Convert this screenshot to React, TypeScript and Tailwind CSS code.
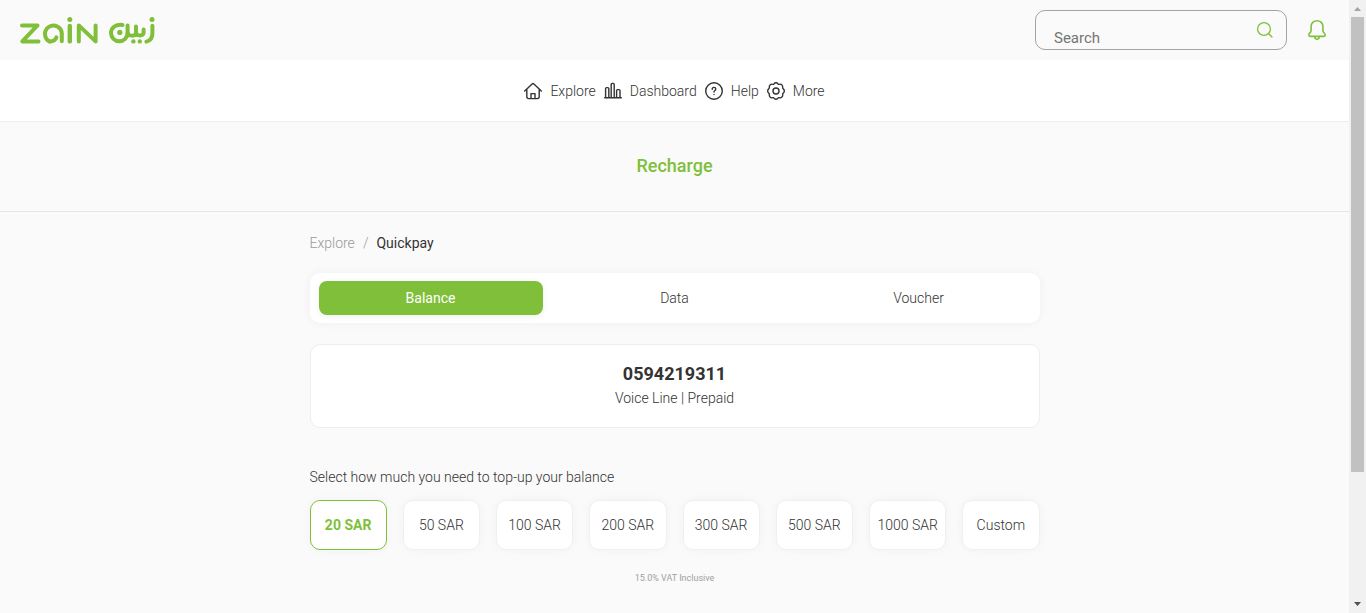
import { useState } from "react";
import type { ReactNode } from "react";

function ZainLogo() {
  return (
    <svg width="140" height="32" viewBox="18 14 140 32" fill="none" stroke="#80bf3a" strokeWidth="4" strokeLinecap="round" strokeLinejoin="round" aria-hidden="true">
      <path d="M22 25.4H37.5L22.3 41.4H38.5" />
      <path d="M49.5 41.4A8.4 8.4 0 1 1 61.8 33.6V41.2" />
      <path d="M49.5 41.4Q55 41.6 56.4 37.4" />
      <path d="M69.8 26V41.4" strokeWidth="4.4" />
      <circle cx="69.8" cy="19.4" r="2.5" fill="#80bf3a" stroke="none" />
      <path d="M78.8 41.4V25.4L95.6 41.4V25.4" />
      <path d="M122.5 25C114.5 23.8 111 28.6 111 33A8.3 8.3 0 0 0 127.6 33V25.4" />
      <path d="M127.6 33C128.2 36.2 135.5 36.8 136 33V26.5M136 33C137 36.2 143 36.4 143.6 33V29.5" />
      <circle cx="119.8" cy="32.4" r="2.6" fill="#80bf3a" stroke="none" />
      <circle cx="133.4" cy="41.4" r="2.2" fill="#80bf3a" stroke="none" />
      <circle cx="139.8" cy="41.4" r="2.2" fill="#80bf3a" stroke="none" />
      <circle cx="152" cy="19.4" r="2.5" fill="#80bf3a" stroke="none" />
      <path d="M152.4 25.8V33.5C152.4 38 150 40.8 146.4 41.6" />
    </svg>
  );
}

function Icon({ children }: { children: ReactNode }) {
  return (
    <svg className="h-[18px] w-[18px] shrink-0" viewBox="1 1 18 18" fill="none" stroke="#333" strokeWidth="1.4" strokeLinecap="round" strokeLinejoin="round" aria-hidden="true">
      {children}
    </svg>
  );
}

const gear =
  "M8 2.8Q8.6 1.7 10 1.7T12 2.8Q12.5 3.6 13.5 3.3Q15 2.8 15.9 3.9T16.7 6.3Q16.4 7.3 17.3 7.9Q18.3 8.6 18.3 10T17.3 12.1Q16.4 12.7 16.7 13.7Q17 15 15.9 16.1T13.5 16.7Q12.5 16.4 12 17.2Q11.4 18.3 10 18.3T8 17.2Q7.5 16.4 6.5 16.7Q5 17.2 4.1 16.1T3.3 13.7Q3.6 12.7 2.7 12.1Q1.7 11.4 1.7 10T2.7 7.9Q3.6 7.3 3.3 6.3Q3 5 4.1 3.9T6.5 3.3Q7.5 3.6 8 2.8Z";

const nav: { label: string; icon: ReactNode }[] = [
  {
    label: "Explore",
    icon: (
      <Icon>
        <path d="M1.7 10L9.1 3Q10 2.2 10.9 3L18.3 10M3.8 8.6V15.6Q3.8 17.6 5.8 17.6H14.2Q16.2 17.6 16.2 15.6V8.6M8 17.4V12.6H12V17.4" />
      </Icon>
    ),
  },
  {
    label: "Dashboard",
    icon: (
      <Icon>
        <path d="M1.7 16.8H18.3M2.6 16.4V7.6Q2.6 6.6 3.6 6.6H4.8Q5.8 6.6 5.8 7.6V16.4M8.2 16.4V3.4Q8.2 2.4 9.2 2.4H10.2Q11.2 2.4 11.2 3.4V16.4M13.6 16.4V9.6Q13.6 8.6 14.6 8.6H16Q17 8.6 17 9.6V16.4" />
      </Icon>
    ),
  },
  {
    label: "Help",
    icon: (
      <Icon>
        <circle cx="10" cy="10" r="8.3" />
        <path d="M8.2 8.2Q8.2 6.4 10 6.4T11.8 8Q11.8 9 10.8 9.6Q10 10 10 11.1M10 13.4V13.6" />
      </Icon>
    ),
  },
  {
    label: "More",
    icon: (
      <Icon>
        <path d={gear} />
        <circle cx="10" cy="10" r="3" />
      </Icon>
    ),
  },
];

const tabs = ["Balance", "Data", "Voucher"];
const amounts = ["20 SAR", "50 SAR", "100 SAR", "200 SAR", "300 SAR", "500 SAR", "1000 SAR", "Custom"];

function ScrollRail() {
  return (
    <div className="sticky top-0 flex h-screen w-[17px] shrink-0 flex-col items-center bg-[#f1f1f1]" aria-hidden="true">
      <svg className="h-[17px] w-[17px] shrink-0" viewBox="0 0 17 17"><path d="M5 11L8.5 7L12 11Z" fill="#a3a3a3" /></svg>
      <div className="flex w-full grow flex-col px-0.5">
        <div className="h-[78.5%] bg-[#c1c1c1]" />
      </div>
      <svg className="h-[17px] w-[17px] shrink-0" viewBox="0 0 17 17"><path d="M5 6L8.5 10L12 6Z" fill="#505050" /></svg>
    </div>
  );
}

export default function App() {
  const [tab, setTab] = useState("Balance");
  const [amount, setAmount] = useState("20 SAR");
  return (
    <div className="flex min-h-screen bg-[#fafafa] font-['Roboto',sans-serif] text-sm font-light text-[#333]">
      <div className="min-w-0 grow">
        <header className="flex h-15 items-center justify-between pr-[22px] pl-[18px]">
          <a href="#home" aria-label="Zain"><ZainLogo /></a>
          <div className="flex items-center gap-5">
            <label className="flex h-10 w-[252px] items-center rounded-[10px] border border-[#a3a3a3] pr-3 pl-[18px]">
              <input type="search" aria-label="Search" placeholder="Search" className="min-w-0 grow bg-transparent pt-4 text-[15px] leading-5 font-normal outline-none placeholder:text-[#757575]" />
              <svg className="h-[18px] w-[18px] shrink-0" viewBox="0 0 18 18" fill="none" stroke="#80bf3a" strokeWidth="1.3" strokeLinecap="round" aria-hidden="true">
                <circle cx="8" cy="8" r="6.4" /><path d="M12.7 12.7L16 16" />
              </svg>
            </label>
            <button type="button" aria-label="Notifications">
              <svg className="h-[22px] w-5" viewBox="0 0 20 22" fill="none" stroke="#80bf3a" strokeWidth="1.6" strokeLinecap="round" strokeLinejoin="round" aria-hidden="true">
                <path d="M10 1.8C6.5 1.8 4.1 4.2 4.1 7.6V11.6Q4.1 13 2.8 14Q1.8 14.8 1.8 16Q1.8 17.4 3.5 17.4H16.5Q18.2 17.4 18.2 16Q18.2 14.8 17.2 14Q15.9 13 15.9 11.6V7.6C15.9 4.2 13.5 1.8 10 1.8ZM7.6 17.8Q7.8 20.2 10 20.2T12.4 17.8" />
              </svg>
            </button>
          </div>
        </header>

        <nav className="flex h-[62px] items-center justify-center gap-2 border-b border-[#eee] bg-white">
          {nav.map((item) => (
            <a key={item.label} href={"#" + item.label.toLowerCase()} className="flex items-center gap-2">
              {item.icon}
              {item.label}
            </a>
          ))}
        </nav>

        <div className="flex h-[90px] items-center justify-center border-b border-[#e6e6e6] pb-0.5">
          <h1 className="text-lg font-medium text-[#80bf3a]">Recharge</h1>
        </div>

        <main className="mx-auto flex max-w-[730px] flex-col pt-[21px]">
          <div className="flex h-5 items-center gap-2">
            <a href="#explore" className="text-[#999]">Explore</a>
            <span className="text-[#999]">/</span>
            <span className="font-normal">Quickpay</span>
          </div>

          <div className="mt-5 grid grid-cols-3 gap-5 rounded-[10px] bg-white px-[9px] py-2 shadow-[0_0_10px_rgba(0,0,0,0.05)]">
            {tabs.map((t) => (
              <button
                key={t}
                type="button"
                onClick={() => setTab(t)}
                className={t === tab ? "h-[34px] rounded-lg bg-[#80bf3a] font-normal text-white shadow-[0_2px_6px_rgba(0,0,0,0.06)]" : "h-[34px] rounded-lg"}
              >
                {t}
              </button>
            ))}
          </div>

          <section className="mt-[21px] flex h-[84px] flex-col items-center justify-center rounded-[10px] border border-[#eee] bg-white">
            <h2 className="text-lg leading-6 font-bold">0594219311</h2>
            <p className="leading-6">Voice Line | Prepaid</p>
          </section>

          <p className="mt-[39px] leading-5">Select how much you need to top-up your balance</p>

          <div className="mt-[13px] grid grid-cols-8 gap-4">
            {amounts.map((a) => (
              <button
                key={a}
                type="button"
                onClick={() => setAmount(a)}
                className={
                  a === amount
                    ? "h-[50px] rounded-[10px] border border-[#80bf3a] bg-white font-bold whitespace-nowrap text-[#80bf3a] shadow-[0_0_10px_rgba(0,0,0,0.04)]"
                    : "h-[50px] rounded-[10px] border border-[#f0f0f0] bg-white whitespace-nowrap shadow-[0_0_10px_rgba(0,0,0,0.04)]"
                }
              >
                {a}
              </button>
            ))}
          </div>

          <p className="mt-5 text-center text-[9px] leading-4 font-normal text-[#a0a0a0]">15.0% VAT Inclusive</p>
        </main>
      </div>
      <ScrollRail />
    </div>
  );
}
